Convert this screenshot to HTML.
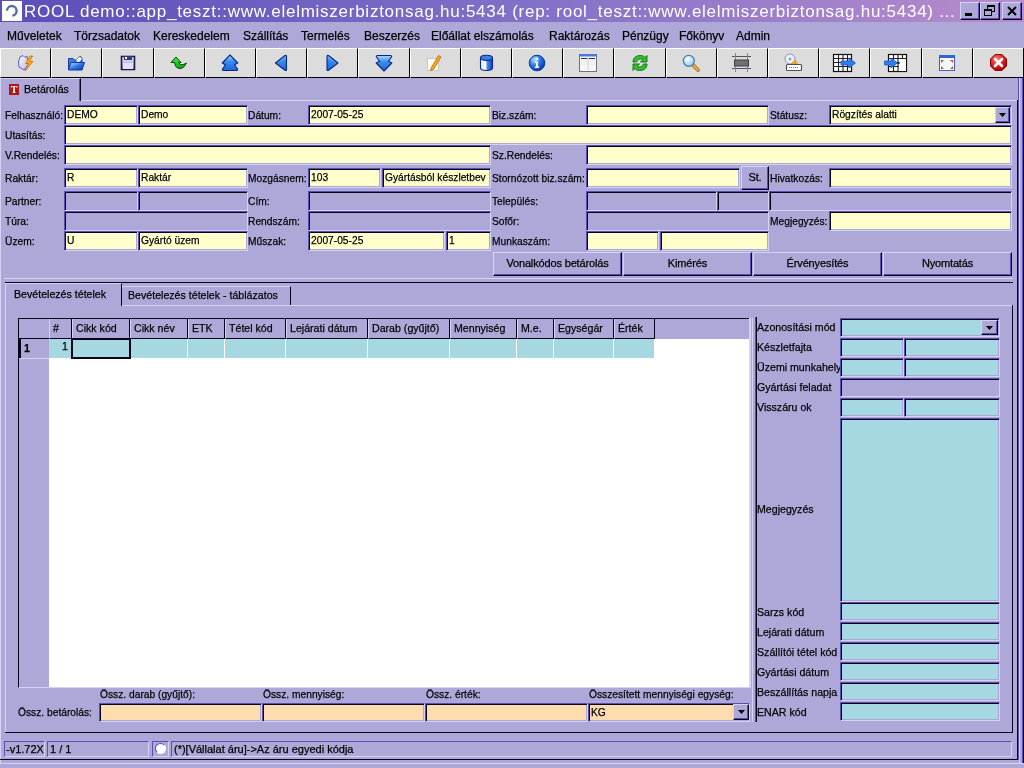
<!DOCTYPE html><html><head><meta charset="utf-8"><style>
*{margin:0;padding:0;box-sizing:border-box}
html,body{width:1024px;height:768px;overflow:hidden;background:#aea8d9;font-family:"Liberation Sans",sans-serif;font-size:11px;color:#000}
div{position:absolute}
#root{left:0;top:0;width:1024px;height:768px;will-change:transform}
.t,.s,.m,.st{white-space:nowrap;line-height:13px;-webkit-text-stroke:0.25px #000}
.t{font-size:11.5px;transform:scaleX(0.89);transform-origin:0 0}
.f span{display:inline-block;font-size:11.5px;transform:scaleX(0.89);transform-origin:0 0}
.s{font-size:11.5px;transform:scaleX(0.923);transform-origin:0 0}
.m{font-size:12px;letter-spacing:0px;line-height:15px}
.f{border:1px solid;border-color:#5a4eb1 #d6d2f4 #d6d2f4 #5a4eb1;box-shadow:inset 1px 1px 0 #06041c, inset -1px -1px 0 #aea8d9;padding:1px 0 0 2px;white-space:nowrap;overflow:hidden;line-height:14px;-webkit-text-stroke:0.25px #000}
.b{border:1px solid;border-color:#d6d2f4 #06041c #06041c #d6d2f4;box-shadow:inset -1px -1px 0 #5a4eb1;background:#aea8d9;text-align:center;white-space:nowrap;letter-spacing:-0.15px;-webkit-text-stroke:0.25px #000}
.tb{border-left:1px solid #fff;border-top:1px solid #fff;border-right:1px solid #000;border-bottom:1px solid #000;background:#dcdcdc}
.sk{border:1px solid;border-color:#5a4eb1 #d6d2f4 #d6d2f4 #5a4eb1}
</style></head><body><div id="root"><div style="left:0;top:0;width:1024px;height:22px;background:linear-gradient(90deg,#5a4eb8 0%,#8070c8 50%,#b88ccc 100%)"></div>
<div style="left:2px;top:1px;width:20px;height:20px;background:#fff"></div>
<svg style="position:absolute;left:0;top:0" width="24" height="22" viewBox="0 0 24 22"><path d="M7 10.8 A4.8 4.8 0 1 1 12.3 15.6" fill="none" stroke="#5272a6" stroke-width="2.4"/></svg>
<div style="left:24px;top:2px;white-space:nowrap;font-size:17px;letter-spacing:0.74px;line-height:20px;color:#fff">ROOL demo::app_teszt::www.elelmiszerbiztonsag.hu:5434 (rep: rool_teszt::www.elelmiszerbiztonsag.hu:5434) ...</div>
<div class="b" style="left:960px;top:2px;width:20px;height:18px"></div>
<div class="b" style="left:980px;top:2px;width:20px;height:18px"></div>
<div class="b" style="left:1002px;top:2px;width:20px;height:18px"></div>
<div style="left:965px;top:13px;width:7px;height:3px;background:#000"></div>
<svg style="position:absolute;left:983px;top:5px" width="13" height="12" viewBox="0 0 13 12"><rect x="4.5" y="0.5" width="7" height="6" fill="none" stroke="#000" stroke-width="1"/><rect x="4" y="0" width="8" height="2" fill="#000"/><rect x="1.5" y="4.5" width="7" height="6" fill="#aea8d9" stroke="#000" stroke-width="1"/><rect x="1" y="4" width="8" height="2" fill="#000"/></svg>
<svg style="position:absolute;left:1005px;top:4px" width="14" height="14" viewBox="0 0 14 14"><path d="M3 3 L11 11 M11 3 L3 11" stroke="#000" stroke-width="2"/></svg>
<div class="m" style="left:7px;top:29px;">Műveletek</div>
<div class="m" style="left:74px;top:29px;">Törzsadatok</div>
<div class="m" style="left:153px;top:29px;">Kereskedelem</div>
<div class="m" style="left:243px;top:29px;">Szállítás</div>
<div class="m" style="left:301px;top:29px;">Termelés</div>
<div class="m" style="left:364px;top:29px;">Beszerzés</div>
<div class="m" style="left:431px;top:29px;">Előállat elszámolás</div>
<div class="m" style="left:549px;top:29px;">Raktározás</div>
<div class="m" style="left:622px;top:29px;">Pénzügy</div>
<div class="m" style="left:679px;top:29px;">Főkönyv</div>
<div class="m" style="left:736px;top:29px;">Admin</div>
<div class="tb" style="left:0px;top:48px;width:51px;height:30px"></div>
<div class="tb" style="left:51px;top:48px;width:51px;height:30px"></div>
<div class="tb" style="left:102px;top:48px;width:52px;height:30px"></div>
<div class="tb" style="left:154px;top:48px;width:51px;height:30px"></div>
<div class="tb" style="left:205px;top:48px;width:51px;height:30px"></div>
<div class="tb" style="left:256px;top:48px;width:51px;height:30px"></div>
<div class="tb" style="left:307px;top:48px;width:51px;height:30px"></div>
<div class="tb" style="left:358px;top:48px;width:52px;height:30px"></div>
<div class="tb" style="left:410px;top:48px;width:51px;height:30px"></div>
<div class="tb" style="left:461px;top:48px;width:51px;height:30px"></div>
<div class="tb" style="left:512px;top:48px;width:51px;height:30px"></div>
<div class="tb" style="left:563px;top:48px;width:51px;height:30px"></div>
<div class="tb" style="left:614px;top:48px;width:52px;height:30px"></div>
<div class="tb" style="left:666px;top:48px;width:51px;height:30px"></div>
<div class="tb" style="left:717px;top:48px;width:51px;height:30px"></div>
<div class="tb" style="left:768px;top:48px;width:51px;height:30px"></div>
<div class="tb" style="left:819px;top:48px;width:51px;height:30px"></div>
<div class="tb" style="left:870px;top:48px;width:52px;height:30px"></div>
<div class="tb" style="left:922px;top:48px;width:51px;height:30px"></div>
<div class="tb" style="left:973px;top:48px;width:51px;height:30px"></div>
<svg style="position:absolute;left:16px;top:54px" width="20" height="18" viewBox="0 0 20 18"><defs><linearGradient id="g0" x1="0" y1="0" x2="1" y2="1"><stop offset="0" stop-color="#ffffff"/><stop offset="1" stop-color="#b8b8f0"/></linearGradient></defs>
<path d="M2.5 8 L4 3 L7 1.5 L9 3.5 L11 2 L12 11 L8 16 L3 13 Z" fill="url(#g0)" stroke="#5a5ad0" stroke-width="1"/>
<path d="M14 2 L9.5 9.5 L12.5 9.5 L9 17 L17 7.5 L13.5 7.5 L16.5 2 Z" fill="#f7b21e" stroke="#d06a00" stroke-width="0.8"/></svg>
<svg style="position:absolute;left:67px;top:55px" width="19" height="17" viewBox="0 0 19 17"><defs><linearGradient id="g1" x1="0" y1="0" x2="1" y2="1"><stop offset="0" stop-color="#d8ecff"/><stop offset="0.5" stop-color="#2f7ae8"/><stop offset="1" stop-color="#0a2fb0"/></linearGradient></defs>
<path d="M1.5 3.5 H6 L7.5 5 H9 L13 1 L15 3 V14.5 H1.5 Z" fill="#3d7de0" stroke="#1b3c9c" stroke-width="1"/>
<path d="M9 5 L13 1.5 L15 4 L11 8 Z" fill="#fff" stroke="#8aa" stroke-width="0.6"/>
<path d="M4 7.5 H17.5 L15 15 H1.5 Z" fill="url(#g1)" stroke="#123a9e" stroke-width="1"/></svg>
<svg style="position:absolute;left:120px;top:55px" width="17" height="16" viewBox="0 0 17 16"><defs><linearGradient id="g2" x1="0" y1="0" x2="0" y2="1"><stop offset="0" stop-color="#f0f0ff"/><stop offset="1" stop-color="#8c8cc8"/></linearGradient></defs>
<rect x="1.5" y="1.5" width="13" height="13" fill="url(#g2)" stroke="#1c1c50" stroke-width="1.6"/>
<rect x="4" y="1" width="8" height="4" fill="#3a3a78"/><rect x="5" y="2" width="2" height="2" fill="#fff"/>
<rect x="3" y="8" width="10" height="6" fill="#e2e2f6"/></svg>
<svg style="position:absolute;left:170px;top:56px" width="19" height="15" viewBox="0 0 19 15"><defs><linearGradient id="g3" x1="0" y1="0" x2="0" y2="1"><stop offset="0" stop-color="#40f040"/><stop offset="1" stop-color="#10a010"/></linearGradient></defs>
<path d="M6 1 L1 6.5 L4.5 6.5 L5.5 10 Q7 13 11 12.5 Q14 12 16.5 7 Q13 9.5 10.5 8.5 Q9.3 8 8.8 6.5 L11 6.5 Z" fill="url(#g3)" stroke="#064a06" stroke-width="1"/></svg>
<svg style="position:absolute;left:221px;top:54px" width="18" height="18" viewBox="0 0 18 18"><defs><linearGradient id="g4" x1="0" y1="0" x2="0" y2="1"><stop offset="0" stop-color="#a8e0ff"/><stop offset="0.4" stop-color="#3c8cf0"/><stop offset="1" stop-color="#1e64e0"/></linearGradient></defs>
<path d="M9 1 L16.8 9 L13.5 10.7 L16.8 15.5 L16 16.5 H2 L1.2 15.5 L4.5 10.7 L1.2 9 Z" fill="url(#g4)" stroke="#08287a" stroke-width="1.1" stroke-linejoin="round"/></svg>
<svg style="position:absolute;left:274px;top:54px" width="15" height="18" viewBox="0 0 15 18"><defs><linearGradient id="g5" x1="0.3" y1="0" x2="0.6" y2="1"><stop offset="0" stop-color="#b0e4ff"/><stop offset="0.45" stop-color="#3a8af0"/><stop offset="1" stop-color="#1e66e0"/></linearGradient></defs>
<path d="M1.5 9 L11 1.5 Q12.5 1 12.5 2.5 V15.5 Q12.5 17 11 16.3 Z" fill="url(#g5)" stroke="#08287a" stroke-width="1.1" stroke-linejoin="round"/></svg>
<svg style="position:absolute;left:325px;top:54px" width="15" height="18" viewBox="0 0 15 18"><defs><linearGradient id="g6" x1="0.7" y1="0" x2="0.4" y2="1"><stop offset="0" stop-color="#b0e4ff"/><stop offset="0.45" stop-color="#3a8af0"/><stop offset="1" stop-color="#1e66e0"/></linearGradient></defs>
<path d="M13 9 L3.5 1.5 Q2 1 2 2.5 V15.5 Q2 17 3.5 16.3 Z" fill="url(#g6)" stroke="#08287a" stroke-width="1.1" stroke-linejoin="round"/></svg>
<svg style="position:absolute;left:375px;top:54px" width="18" height="18" viewBox="0 0 18 18"><defs><linearGradient id="g7" x1="0" y1="0" x2="0" y2="1"><stop offset="0" stop-color="#a8e0ff"/><stop offset="0.4" stop-color="#3c8cf0"/><stop offset="1" stop-color="#1e64e0"/></linearGradient></defs>
<path d="M9 17 L16.8 9 L13.5 7.3 L16.8 2.5 L16 1.5 H2 L1.2 2.5 L4.5 7.3 L1.2 9 Z" fill="url(#g7)" stroke="#08287a" stroke-width="1.1" stroke-linejoin="round"/></svg>
<svg style="position:absolute;left:426px;top:54px" width="16" height="18" viewBox="0 0 16 18"><rect x="1.5" y="4.5" width="11" height="12" fill="#fffef0" stroke="#c8c8c8" stroke-width="1"/>
<path d="M5 14 L12.5 1.5 L15 3 L7.5 15.5 L4.5 16.5 Z" fill="#f5a623" stroke="#b86a00" stroke-width="0.8"/></svg>
<svg style="position:absolute;left:479px;top:54px" width="15" height="18" viewBox="0 0 15 18"><defs><linearGradient id="g9" x1="0" y1="0" x2="1" y2="0"><stop offset="0" stop-color="#d8f0ff"/><stop offset="0.45" stop-color="#f4fbff"/><stop offset="0.55" stop-color="#4a8ae8"/><stop offset="1" stop-color="#0c40c0"/></linearGradient></defs>
<path d="M1.5 3.5 V14 Q1.5 16.5 7.5 16.5 Q13.5 16.5 13.5 14 V3.5" fill="url(#g9)" stroke="#0a2a80" stroke-width="1.1"/>
<ellipse cx="7.5" cy="3.8" rx="6" ry="2.6" fill="#3a7ee8" stroke="#0a2a80" stroke-width="1.1"/></svg>
<svg style="position:absolute;left:528px;top:54px" width="18" height="18" viewBox="0 0 18 18"><defs><radialGradient id="g10" cx="0.35" cy="0.3" r="0.7"><stop offset="0" stop-color="#bfe0ff"/><stop offset="0.5" stop-color="#2d7ae8"/><stop offset="1" stop-color="#0a3cae"/></radialGradient></defs>
<circle cx="9" cy="9" r="7.8" fill="url(#g10)" stroke="#0b3a9a" stroke-width="1"/>
<circle cx="9" cy="4.8" r="1.4" fill="#fff"/><path d="M7 7.5 H10 V12.5 H11.2 V14 H6.8 V12.5 H8 V9 H7 Z" fill="#fff"/></svg>
<svg style="position:absolute;left:578px;top:53px" width="20" height="20" viewBox="0 0 20 20"><rect x="1.5" y="1.5" width="17" height="17" fill="#f6f6f6" stroke="#707080" stroke-width="1"/>
<rect x="1" y="1" width="18" height="2.5" fill="#4a7ad8"/>
<path d="M3 5.5 H9.5 M11 5.5 H17" stroke="#303040" stroke-width="1.2"/>
<path d="M10.2 4 V17" stroke="#c8c8c8" stroke-width="0.8"/>
<path d="M3.5 8 H9 M11.5 8 H16.5 M3.5 11 H9 M11.5 11 H16.5" stroke="#e0e8e0" stroke-width="0.8"/></svg>
<svg style="position:absolute;left:631px;top:54px" width="18" height="18" viewBox="0 0 18 18"><path d="M2 8 C2 3 6 1.5 9.5 1.5 C12 1.5 13.5 2.5 14 3.5 L16 1.5 L16 8 L9.5 8 L11.8 5.7 C10.5 4.5 7 4.5 5.5 8 Z" fill="#2fbf2f" stroke="#0e6e0e" stroke-width="0.9"/>
<path d="M16 10 C16 15 12 16.5 8.5 16.5 C6 16.5 4.5 15.5 4 14.5 L2 16.5 L2 10 L8.5 10 L6.2 12.3 C7.5 13.5 11 13.5 12.5 10 Z" fill="#2fbf2f" stroke="#0e6e0e" stroke-width="0.9"/></svg>
<svg style="position:absolute;left:682px;top:54px" width="18" height="18" viewBox="0 0 18 18"><defs><radialGradient id="g13" cx="0.4" cy="0.35" r="0.7"><stop offset="0" stop-color="#ffffff"/><stop offset="1" stop-color="#8ac8f0"/></radialGradient></defs>
<path d="M10.5 10.5 L16 16" stroke="#a06010" stroke-width="3.6" stroke-linecap="round"/>
<path d="M10.5 10.5 L16 16" stroke="#f0b040" stroke-width="2" stroke-linecap="round"/>
<circle cx="6.8" cy="6.8" r="5.5" fill="url(#g13)" stroke="#4a7ab0" stroke-width="1.3"/></svg>
<svg style="position:absolute;left:731px;top:52px" width="21" height="21" viewBox="0 0 21 21"><path d="M1 4.5 H20 M1 16.5 H20" stroke="#505060" stroke-width="1"/>
<path d="M4.5 1 V20 M16.5 1 V20" stroke="#8080a0" stroke-width="1"/>
<rect x="3.5" y="8" width="14" height="6" fill="#707070" stroke="#404040" stroke-width="1"/></svg>
<svg style="position:absolute;left:783px;top:53px" width="20" height="20" viewBox="0 0 20 20"><circle cx="7" cy="6" r="5" fill="#e8eef8" stroke="#8898b8" stroke-width="1"/><circle cx="7" cy="6" r="1.3" fill="#8898b8"/>
<path d="M9 9 L13 7 L15 11 L9 11 Z" fill="#f0a030"/>
<rect x="3.5" y="11.5" width="15" height="6" rx="1" fill="#fff" stroke="#505050" stroke-width="1.2"/>
<path d="M6 14.5 H16" stroke="#707070" stroke-width="1.2" stroke-dasharray="1 1"/></svg>
<svg style="position:absolute;left:832px;top:53px" width="25" height="20" viewBox="0 0 25 20"><rect x="1.5" y="1.5" width="18" height="17" fill="#fff" stroke="#101010" stroke-width="1.2"/>
<path d="M1 5.5 H20 M1 9.5 H20 M1 13.5 H20 M6.5 1 V19 M11 1 V19 M15.5 1 V19" stroke="#202020" stroke-width="1.1"/>
<path d="M9 8 H17 V5 L23.5 10 L17 15 V12 H9 Z" fill="#2f7ef0" stroke="#1d5cc8" stroke-width="0.8"/></svg>
<svg style="position:absolute;left:883px;top:53px" width="25" height="20" viewBox="0 0 25 20"><rect x="5.5" y="1.5" width="18" height="17" fill="#fff" stroke="#101010" stroke-width="1.2"/>
<path d="M5 5.5 H24 M5 9.5 H24 M5 13.5 H24 M10.5 1 V19 M15 1 V19 M19.5 1 V19" stroke="#202020" stroke-width="1.1"/>
<rect x="16" y="6" width="7" height="12" fill="#fff"/>
<path d="M1.5 8 H8 V5 L14.5 10 L8 15 V12 H1.5 Z" fill="#2f7ef0" stroke="#1d5cc8" stroke-width="0.8"/>
<path d="M14 10 H17" stroke="#000" stroke-width="1"/></svg>
<svg style="position:absolute;left:938px;top:54px" width="18" height="18" viewBox="0 0 18 18"><rect x="1.5" y="1.5" width="15" height="15" fill="#f6f8ff" stroke="#3a62c0" stroke-width="1"/>
<rect x="1" y="1" width="16" height="3" fill="#2e66d8"/>
<path d="M3 6 L6 6 L3 9 Z M15 6 L12 6 L15 9 Z M3 15 L6 15 L3 12 Z M15 15 L12 15 L15 12 Z" fill="#e04020"/></svg>
<svg style="position:absolute;left:989px;top:53px" width="19" height="19" viewBox="0 0 19 19"><defs><radialGradient id="g19" cx="0.4" cy="0.3" r="0.75"><stop offset="0" stop-color="#ff7a7a"/><stop offset="0.6" stop-color="#e01818"/><stop offset="1" stop-color="#a00000"/></radialGradient></defs>
<path d="M6 1.5 H13 L17.5 6 V13 L13 17.5 H6 L1.5 13 V6 Z" fill="url(#g19)" stroke="#900000" stroke-width="1"/>
<path d="M6 6 L13 13 M13 6 L6 13" stroke="#fff" stroke-width="2.6" stroke-linecap="round"/></svg>
<div style="left:0px;top:78px;width:1px;height:685px;background:#d6d2f4"></div>
<div style="left:0;top:78px;width:81px;height:23px;background:#aea8d9;border-top:1px solid #d6d2f4;border-left:1px solid #d6d2f4;border-right:1px solid #06041c;box-shadow:inset -1px 0 0 #5a4eb1"></div>
<div style="left:9px;top:84px;width:10px;height:11px;background:#b01818;color:#fff;font:bold 10px 'Liberation Serif',serif;text-align:center;line-height:11px">T</div>
<div class="s" style="left:24px;top:83px;">Betárolás</div>
<div style="left:81px;top:100px;width:937px;height:1px;background:#d6d2f4"></div>
<div style="left:1017px;top:100px;width:1px;height:660px;background:#06041c"></div>
<div style="left:1018px;top:78px;width:1px;height:682px;background:#5a4eb1"></div>
<div style="left:1019px;top:78px;width:1px;height:685px;background:#d6d2f4"></div>
<div style="left:1022px;top:78px;width:1px;height:685px;background:#5a4eb1"></div>
<div style="left:1023px;top:48px;width:1px;height:715px;background:#06041c"></div>
<div class="t" style="left:5px;top:109px;">Felhasználó:</div>
<div class="t" style="left:5px;top:129px;">Utasítás:</div>
<div class="t" style="left:5px;top:149px;">V.Rendelés:</div>
<div class="t" style="left:5px;top:172px;">Raktár:</div>
<div class="t" style="left:5px;top:195px;">Partner:</div>
<div class="t" style="left:5px;top:215px;">Túra:</div>
<div class="t" style="left:5px;top:235px;">Üzem:</div>
<div class="t" style="left:248px;top:109px;">Dátum:</div>
<div class="t" style="left:248px;top:172px;">Mozgásnem:</div>
<div class="t" style="left:248px;top:195px;">Cím:</div>
<div class="t" style="left:248px;top:215px;">Rendszám:</div>
<div class="t" style="left:248px;top:235px;">Műszak:</div>
<div class="t" style="left:492px;top:109px;">Biz.szám:</div>
<div class="t" style="left:492px;top:149px;">Sz.Rendelés:</div>
<div class="t" style="left:492px;top:172px;">Stornózott biz.szám:</div>
<div class="t" style="left:492px;top:195px;">Település:</div>
<div class="t" style="left:492px;top:215px;">Sofőr:</div>
<div class="t" style="left:492px;top:235px;">Munkaszám:</div>
<div class="t" style="left:770px;top:109px;">Státusz:</div>
<div class="t" style="left:770px;top:172px;">Hivatkozás:</div>
<div class="t" style="left:770px;top:215px;">Megjegyzés:</div>
<div class="f" style="left:64px;top:105px;width:74px;height:20px;background:#ffffcc"><span>DEMO</span></div>
<div class="f" style="left:138px;top:105px;width:110px;height:20px;background:#ffffcc"><span>Demo</span></div>
<div class="f" style="left:308px;top:105px;width:183px;height:20px;background:#ffffcc"><span>2007-05-25</span></div>
<div class="f" style="left:586px;top:105px;width:183px;height:20px;background:#ffffcc"><span></span></div>
<div class="f" style="left:829px;top:105px;width:183px;height:20px;background:#ffffcc"><span>Rögzítés alatti</span></div>
<div class="f" style="left:64px;top:125px;width:948px;height:20px;background:#ffffcc"><span></span></div>
<div class="f" style="left:64px;top:145px;width:427px;height:20px;background:#ffffcc"><span></span></div>
<div class="f" style="left:586px;top:145px;width:426px;height:20px;background:#ffffcc"><span></span></div>
<div class="f" style="left:64px;top:168px;width:74px;height:20px;background:#ffffcc"><span>R</span></div>
<div class="f" style="left:138px;top:168px;width:110px;height:20px;background:#ffffcc"><span>Raktár</span></div>
<div class="f" style="left:308px;top:168px;width:73px;height:20px;background:#ffffcc"><span>103</span></div>
<div class="f" style="left:382px;top:168px;width:109px;height:20px;background:#ffffcc"><span>Gyártásból készletbev</span></div>
<div class="f" style="left:586px;top:168px;width:154px;height:20px;background:#ffffcc"><span></span></div>
<div class="f" style="left:829px;top:168px;width:183px;height:20px;background:#ffffcc"><span></span></div>
<div class="f" style="left:64px;top:191px;width:74px;height:20px;background:#aea8d9"><span></span></div>
<div class="f" style="left:138px;top:191px;width:110px;height:20px;background:#aea8d9"><span></span></div>
<div class="f" style="left:308px;top:191px;width:183px;height:20px;background:#aea8d9"><span></span></div>
<div class="f" style="left:586px;top:191px;width:131px;height:20px;background:#aea8d9"><span></span></div>
<div class="f" style="left:717px;top:191px;width:52px;height:20px;background:#aea8d9"><span></span></div>
<div class="f" style="left:769px;top:191px;width:243px;height:20px;background:#aea8d9"><span></span></div>
<div class="f" style="left:64px;top:211px;width:184px;height:20px;background:#aea8d9"><span></span></div>
<div class="f" style="left:308px;top:211px;width:183px;height:20px;background:#aea8d9"><span></span></div>
<div class="f" style="left:586px;top:211px;width:183px;height:20px;background:#aea8d9"><span></span></div>
<div class="f" style="left:829px;top:211px;width:183px;height:20px;background:#ffffcc"><span></span></div>
<div class="f" style="left:64px;top:231px;width:74px;height:20px;background:#ffffcc"><span>U</span></div>
<div class="f" style="left:138px;top:231px;width:110px;height:20px;background:#ffffcc"><span>Gyártó üzem</span></div>
<div class="f" style="left:308px;top:231px;width:137px;height:20px;background:#ffffcc"><span>2007-05-25</span></div>
<div class="f" style="left:446px;top:231px;width:45px;height:20px;background:#ffffcc"><span>1</span></div>
<div class="f" style="left:586px;top:231px;width:73px;height:20px;background:#ffffcc"><span></span></div>
<div class="f" style="left:660px;top:231px;width:109px;height:20px;background:#ffffcc"><span></span></div>
<div class="b" style="left:995px;top:107px;width:15px;height:16px;line-height:13px"><svg width="7" height="4" style="position:absolute;left:3px;top:5px"><path d="M0 0H7L3.5 4Z" fill="#000"/></svg></div>
<div class="b" style="left:741px;top:166px;width:28px;height:24px;line-height:21px">St.</div>
<div class="b" style="left:493px;top:252px;width:129px;height:24px;line-height:21px">Vonalkódos betárolás</div>
<div class="b" style="left:623px;top:252px;width:129px;height:24px;line-height:21px">Kimérés</div>
<div class="b" style="left:753px;top:252px;width:129px;height:24px;line-height:21px">Érvényesítés</div>
<div class="b" style="left:883px;top:252px;width:129px;height:24px;line-height:21px">Nyomtatás</div>
<div style="left:4px;top:278px;width:1009px;height:1px;background:#d6d2f4"></div>
<div style="left:5px;top:282px;width:1008px;height:1px;background:#06041c"></div>
<div style="left:5px;top:283px;width:117px;height:23px;border-left:1px solid #d6d2f4;border-top:1px solid #d6d2f4;border-right:1px solid #06041c;background:#aea8d9"></div>
<div class="s" style="left:14px;top:288px;">Bevételezés tételek</div>
<div style="left:122px;top:286px;width:169px;height:20px;border-top:1px solid #d6d2f4;border-right:1px solid #06041c;background:#aea8d9"></div>
<div class="s" style="left:128px;top:289px;">Bevételezés tételek - táblázatos</div>
<div style="left:122px;top:305px;width:891px;height:1px;background:#d6d2f4"></div>
<div style="left:5px;top:306px;width:1px;height:427px;background:#d6d2f4"></div>
<div style="left:1012px;top:305px;width:1px;height:428px;background:#06041c"></div>
<div style="left:5px;top:732px;width:1008px;height:1px;background:#06041c"></div>
<div style="left:18px;top:318px;width:733px;height:370px;border-top:1px solid #06041c;border-left:1px solid #06041c;border-bottom:1px solid #d6d2f4;background:#fff"></div>
<div style="left:19px;top:319px;width:30px;height:368px;background:#aea8d9"></div>
<div style="left:49px;top:319px;width:700px;height:20px;background:#aea8d9"></div>
<div style="left:19px;top:338px;width:636px;height:1px;background:#06041c"></div>
<div style="left:49px;top:319px;width:23px;height:20px;border-left:1px solid #d6d2f4;border-right:1px solid #06041c;border-bottom:1px solid #06041c"></div>
<div class="s" style="left:53px;top:322px;">#</div>
<div style="left:49px;top:339px;width:23px;height:19px;background:#a6d8e2;border-right:1px solid #fff"></div>
<div style="left:72px;top:319px;width:58px;height:20px;border-left:1px solid #d6d2f4;border-right:1px solid #06041c;border-bottom:1px solid #06041c"></div>
<div class="s" style="left:76px;top:322px;">Cikk kód</div>
<div style="left:72px;top:339px;width:58px;height:19px;background:#a6d8e2;border-right:1px solid #fff"></div>
<div style="left:130px;top:319px;width:58px;height:20px;border-left:1px solid #d6d2f4;border-right:1px solid #06041c;border-bottom:1px solid #06041c"></div>
<div class="s" style="left:134px;top:322px;">Cikk név</div>
<div style="left:130px;top:339px;width:58px;height:19px;background:#a6d8e2;border-right:1px solid #fff"></div>
<div style="left:188px;top:319px;width:37px;height:20px;border-left:1px solid #d6d2f4;border-right:1px solid #06041c;border-bottom:1px solid #06041c"></div>
<div class="s" style="left:192px;top:322px;">ETK</div>
<div style="left:188px;top:339px;width:37px;height:19px;background:#a6d8e2;border-right:1px solid #fff"></div>
<div style="left:225px;top:319px;width:61px;height:20px;border-left:1px solid #d6d2f4;border-right:1px solid #06041c;border-bottom:1px solid #06041c"></div>
<div class="s" style="left:229px;top:322px;">Tétel kód</div>
<div style="left:225px;top:339px;width:61px;height:19px;background:#a6d8e2;border-right:1px solid #fff"></div>
<div style="left:286px;top:319px;width:82px;height:20px;border-left:1px solid #d6d2f4;border-right:1px solid #06041c;border-bottom:1px solid #06041c"></div>
<div class="s" style="left:290px;top:322px;">Lejárati dátum</div>
<div style="left:286px;top:339px;width:82px;height:19px;background:#a6d8e2;border-right:1px solid #fff"></div>
<div style="left:368px;top:319px;width:82px;height:20px;border-left:1px solid #d6d2f4;border-right:1px solid #06041c;border-bottom:1px solid #06041c"></div>
<div class="s" style="left:372px;top:322px;">Darab (gyűjtő)</div>
<div style="left:368px;top:339px;width:82px;height:19px;background:#a6d8e2;border-right:1px solid #fff"></div>
<div style="left:450px;top:319px;width:67px;height:20px;border-left:1px solid #d6d2f4;border-right:1px solid #06041c;border-bottom:1px solid #06041c"></div>
<div class="s" style="left:454px;top:322px;">Mennyiség</div>
<div style="left:450px;top:339px;width:67px;height:19px;background:#a6d8e2;border-right:1px solid #fff"></div>
<div style="left:517px;top:319px;width:37px;height:20px;border-left:1px solid #d6d2f4;border-right:1px solid #06041c;border-bottom:1px solid #06041c"></div>
<div class="s" style="left:521px;top:322px;">M.e.</div>
<div style="left:517px;top:339px;width:37px;height:19px;background:#a6d8e2;border-right:1px solid #fff"></div>
<div style="left:554px;top:319px;width:60px;height:20px;border-left:1px solid #d6d2f4;border-right:1px solid #06041c;border-bottom:1px solid #06041c"></div>
<div class="s" style="left:558px;top:322px;">Egységár</div>
<div style="left:554px;top:339px;width:60px;height:19px;background:#a6d8e2;border-right:1px solid #fff"></div>
<div style="left:614px;top:319px;width:41px;height:20px;border-left:1px solid #d6d2f4;border-right:1px solid #06041c;border-bottom:1px solid #06041c"></div>
<div class="s" style="left:618px;top:322px;">Érték</div>
<div style="left:614px;top:339px;width:41px;height:19px;background:#a6d8e2;border-right:1px solid #fff"></div>
<div class="s" style="left:24px;top:342px;"><b>1</b></div>
<div style="left:19px;top:339px;width:2px;height:19px;background:#06041c"></div>
<div class="s" style="left:62px;top:340px;">1</div>
<div style="left:71px;top:338px;width:60px;height:21px;border:2px solid #06041c"></div>
<div style="left:19px;top:358px;width:30px;height:1px;background:#d6d2f4"></div>
<div style="left:749px;top:318px;width:2px;height:370px;background:#d6d2f4"></div>
<div style="left:752px;top:318px;width:1px;height:404px;background:#d6d2f4"></div>
<div class="t" style="left:100px;top:688px;">Össz. darab (gyűjtő):</div>
<div class="t" style="left:263px;top:688px;">Össz. mennyiség:</div>
<div class="t" style="left:426px;top:688px;">Össz. érték:</div>
<div class="t" style="left:589px;top:688px;">Összesített mennyiségi egység:</div>
<div class="t" style="left:18px;top:706px;">Össz. betárolás:</div>
<div class="f" style="left:99px;top:703px;width:163px;height:19px;background:#ffdcb0"><span></span></div>
<div class="f" style="left:262px;top:703px;width:163px;height:19px;background:#ffdcb0"><span></span></div>
<div class="f" style="left:425px;top:703px;width:163px;height:19px;background:#ffdcb0"><span></span></div>
<div class="f" style="left:588px;top:703px;width:162px;height:19px;background:#ffdcb0"><span>KG</span></div>
<div class="b" style="left:733px;top:704px;width:16px;height:16px;line-height:13px"><svg width="7" height="4" style="position:absolute;left:4px;top:5px"><path d="M0 0H7L3.5 4Z" fill="#000"/></svg></div>
<div style="left:755px;top:317px;width:1px;height:405px;background:#5a4eb1"></div>
<div style="left:756px;top:317px;width:1px;height:405px;background:#06041c"></div>
<div class="s" style="left:757px;top:321px;">Azonosítási mód</div>
<div class="f" style="left:840px;top:318px;width:160px;height:19px;background:#a6d8e2"><span></span></div>
<div class="b" style="left:981px;top:320px;width:17px;height:15px;line-height:12px"><svg width="7" height="4" style="position:absolute;left:4px;top:5px"><path d="M0 0H7L3.5 4Z" fill="#000"/></svg></div>
<div class="s" style="left:757px;top:341px;">Készletfajta</div>
<div class="f" style="left:840px;top:338px;width:64px;height:19px;background:#a6d8e2"><span></span></div>
<div class="f" style="left:904px;top:338px;width:96px;height:19px;background:#a6d8e2"><span></span></div>
<div class="s" style="left:757px;top:361px;">Üzemi munkahely</div>
<div class="f" style="left:840px;top:358px;width:64px;height:19px;background:#a6d8e2"><span></span></div>
<div class="f" style="left:904px;top:358px;width:96px;height:19px;background:#a6d8e2"><span></span></div>
<div class="s" style="left:757px;top:381px;">Gyártási feladat</div>
<div class="f" style="left:840px;top:378px;width:160px;height:19px;background:#aea8d9"><span></span></div>
<div class="s" style="left:757px;top:401px;">Visszáru ok</div>
<div class="f" style="left:840px;top:398px;width:64px;height:19px;background:#a6d8e2"><span></span></div>
<div class="f" style="left:904px;top:398px;width:96px;height:19px;background:#a6d8e2"><span></span></div>
<div class="f" style="left:840px;top:418px;width:160px;height:184px;background:#a6d8e2"><span></span></div>
<div class="s" style="left:757px;top:503px;">Megjegyzés</div>
<div class="s" style="left:757px;top:606px;">Sarzs kód</div>
<div class="f" style="left:840px;top:602px;width:160px;height:19px;background:#a6d8e2"><span></span></div>
<div class="s" style="left:757px;top:626px;">Lejárati dátum</div>
<div class="f" style="left:840px;top:622px;width:160px;height:19px;background:#a6d8e2"><span></span></div>
<div class="s" style="left:757px;top:646px;">Szállítói tétel kód</div>
<div class="f" style="left:840px;top:642px;width:160px;height:19px;background:#a6d8e2"><span></span></div>
<div class="s" style="left:757px;top:666px;">Gyártási dátum</div>
<div class="f" style="left:840px;top:662px;width:160px;height:19px;background:#a6d8e2"><span></span></div>
<div class="s" style="left:757px;top:686px;">Beszállítás napja</div>
<div class="f" style="left:840px;top:682px;width:160px;height:19px;background:#a6d8e2"><span></span></div>
<div class="s" style="left:757px;top:706px;">ENAR kód</div>
<div class="f" style="left:840px;top:702px;width:160px;height:19px;background:#a6d8e2"><span></span></div>
<div class="sk" style="left:4px;top:741px;width:41px;height:16px"></div>
<div class="st" style="left:6px;top:743px;">-v1.72X</div>
<div class="sk" style="left:47px;top:741px;width:102px;height:16px"></div>
<div class="st" style="left:50px;top:743px;">1 / 1</div>
<div class="sk" style="left:152px;top:741px;width:17px;height:16px"></div>
<div style="left:155px;top:743px;width:11px;height:11px;border-radius:50%;background:#fff;border:1px solid;border-color:#5a4eb1 #fff #fff #5a4eb1"></div>
<div class="sk" style="left:171px;top:741px;width:841px;height:16px"></div>
<div class="st" style="left:174px;top:743px;">(*)[Vállalat áru]->Az áru egyedi kódja</div>
<div style="left:0px;top:759px;width:1018px;height:1px;background:#06041c"></div>
<div style="left:0px;top:763px;width:1024px;height:1px;background:#d6d2f4"></div></div></body></html>
